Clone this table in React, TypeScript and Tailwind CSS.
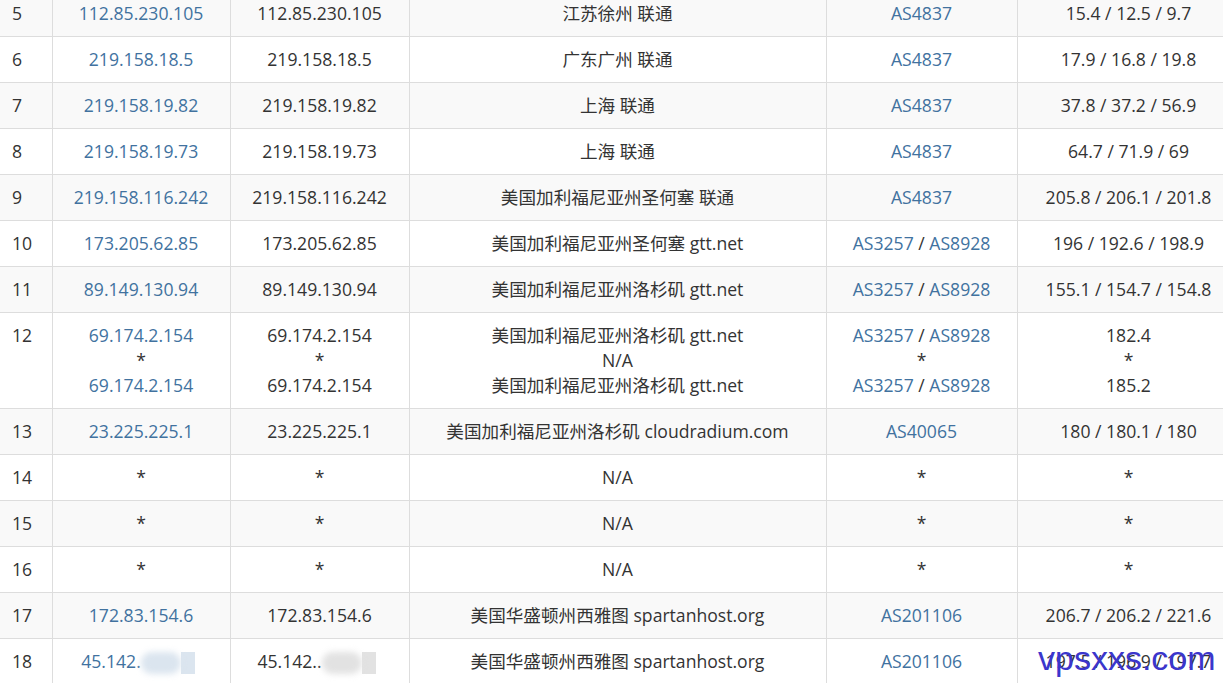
import React from 'react'

type Hop = {
  no: number
  ip: string[]
  host: string[]
  loc: string[]
  as: string[][]
  time: string[]
  blur?: boolean
}

const hops: Hop[] = [
  { no: 5, ip: ['112.85.230.105'], host: ['112.85.230.105'], loc: ['江苏徐州 联通'], as: [['AS4837']], time: ['15.4 / 12.5 / 9.7'] },
  { no: 6, ip: ['219.158.18.5'], host: ['219.158.18.5'], loc: ['广东广州 联通'], as: [['AS4837']], time: ['17.9 / 16.8 / 19.8'] },
  { no: 7, ip: ['219.158.19.82'], host: ['219.158.19.82'], loc: ['上海 联通'], as: [['AS4837']], time: ['37.8 / 37.2 / 56.9'] },
  { no: 8, ip: ['219.158.19.73'], host: ['219.158.19.73'], loc: ['上海 联通'], as: [['AS4837']], time: ['64.7 / 71.9 / 69'] },
  { no: 9, ip: ['219.158.116.242'], host: ['219.158.116.242'], loc: ['美国加利福尼亚州圣何塞 联通'], as: [['AS4837']], time: ['205.8 / 206.1 / 201.8'] },
  { no: 10, ip: ['173.205.62.85'], host: ['173.205.62.85'], loc: ['美国加利福尼亚州圣何塞 gtt.net'], as: [['AS3257', 'AS8928']], time: ['196 / 192.6 / 198.9'] },
  { no: 11, ip: ['89.149.130.94'], host: ['89.149.130.94'], loc: ['美国加利福尼亚州洛杉矶 gtt.net'], as: [['AS3257', 'AS8928']], time: ['155.1 / 154.7 / 154.8'] },
  {
    no: 12,
    ip: ['69.174.2.154', '*', '69.174.2.154'],
    host: ['69.174.2.154', '*', '69.174.2.154'],
    loc: ['美国加利福尼亚州洛杉矶 gtt.net', 'N/A', '美国加利福尼亚州洛杉矶 gtt.net'],
    as: [['AS3257', 'AS8928'], ['*'], ['AS3257', 'AS8928']],
    time: ['182.4', '*', '185.2'],
  },
  { no: 13, ip: ['23.225.225.1'], host: ['23.225.225.1'], loc: ['美国加利福尼亚州洛杉矶 cloudradium.com'], as: [['AS40065']], time: ['180 / 180.1 / 180'] },
  { no: 14, ip: ['*'], host: ['*'], loc: ['N/A'], as: [['*']], time: ['*'] },
  { no: 15, ip: ['*'], host: ['*'], loc: ['N/A'], as: [['*']], time: ['*'] },
  { no: 16, ip: ['*'], host: ['*'], loc: ['N/A'], as: [['*']], time: ['*'] },
  { no: 17, ip: ['172.83.154.6'], host: ['172.83.154.6'], loc: ['美国华盛顿州西雅图 spartanhost.org'], as: [['AS201106']], time: ['206.7 / 206.2 / 221.6'] },
  { no: 18, ip: ['45.142.'], host: ['45.142..'], loc: ['美国华盛顿州西雅图 spartanhost.org'], as: [['AS201106']], time: ['197.5 / 196.9 / 197.7'], blur: true },
]

const td = 'border border-[#dddddd] px-2 py-[10px] text-center align-top'

function Line({ children }: { children: React.ReactNode }) {
  return <div className="h-[25px] leading-[25px] whitespace-nowrap">{children}</div>
}

function Smudge({ tint }: { tint: string }) {
  return (
    <span className="inline-flex h-[24px] w-[60px] items-center align-middle">
      <span className={`h-[22px] w-[40px] rounded-full blur-[3px] ${tint}`} />
      <span className={`h-[22px] w-[14px] ${tint}`} />
    </span>
  )
}

export default function App() {
  return (
    <div className="relative h-[683px] w-[1223px] overflow-hidden bg-white text-[17.6px] text-[#333333] [font-family:'Open_Sans','Noto_Sans_CJK_SC',sans-serif]">
      <table className="-mt-[10px] w-[1240px] table-fixed border-collapse">
        <colgroup>
          <col className="w-[52px]" />
          <col className="w-[178px]" />
          <col className="w-[179px]" />
          <col className="w-[417px]" />
          <col className="w-[191px]" />
          <col className="w-[223px]" />
        </colgroup>
        <tbody>
          {hops.map((h, i) => (
            <tr key={h.no} className={i % 2 === 0 ? 'bg-[#f9f9f9]' : 'bg-white'}>
              <td className="border border-l-0 border-[#dddddd] py-[10px] pl-[12px] text-left align-top">
                <Line>{h.no}</Line>
              </td>
              <td className={td}>
                {h.ip.map((v, k) => (
                  <Line key={k}>
                    {v === '*' ? (
                      <span>*</span>
                    ) : (
                      <span className="text-[#41729f]">
                        {v}
                        {h.blur && <Smudge tint="bg-[#dbe5ef]" />}
                      </span>
                    )}
                  </Line>
                ))}
              </td>
              <td className={td}>
                {h.host.map((v, k) => (
                  <Line key={k}>
                    {v}
                    {h.blur && <Smudge tint="bg-[#e2e2e2]" />}
                  </Line>
                ))}
              </td>
              <td className={td}>
                {h.loc.map((v, k) => (
                  <Line key={k}>{v}</Line>
                ))}
              </td>
              <td className={td}>
                {h.as.map((list, k) => (
                  <Line key={k}>
                    {list.map((a, j) => (
                      <React.Fragment key={j}>
                        {j > 0 && <span> / </span>}
                        {a === '*' ? <span>*</span> : <span className="text-[#41729f]">{a}</span>}
                      </React.Fragment>
                    ))}
                  </Line>
                ))}
              </td>
              <td className={td}>
                {h.time.map((v, k) => (
                  <Line key={k}>{v}</Line>
                ))}
              </td>
            </tr>
          ))}
        </tbody>
      </table>
      <div className="pointer-events-none absolute left-[1038px] top-[636px] text-[34px] leading-[44px] text-[#3b36cc] [font-family:'Liberation_Sans',Arial,sans-serif]">
        vpsxxs.com
      </div>
    </div>
  )
}
